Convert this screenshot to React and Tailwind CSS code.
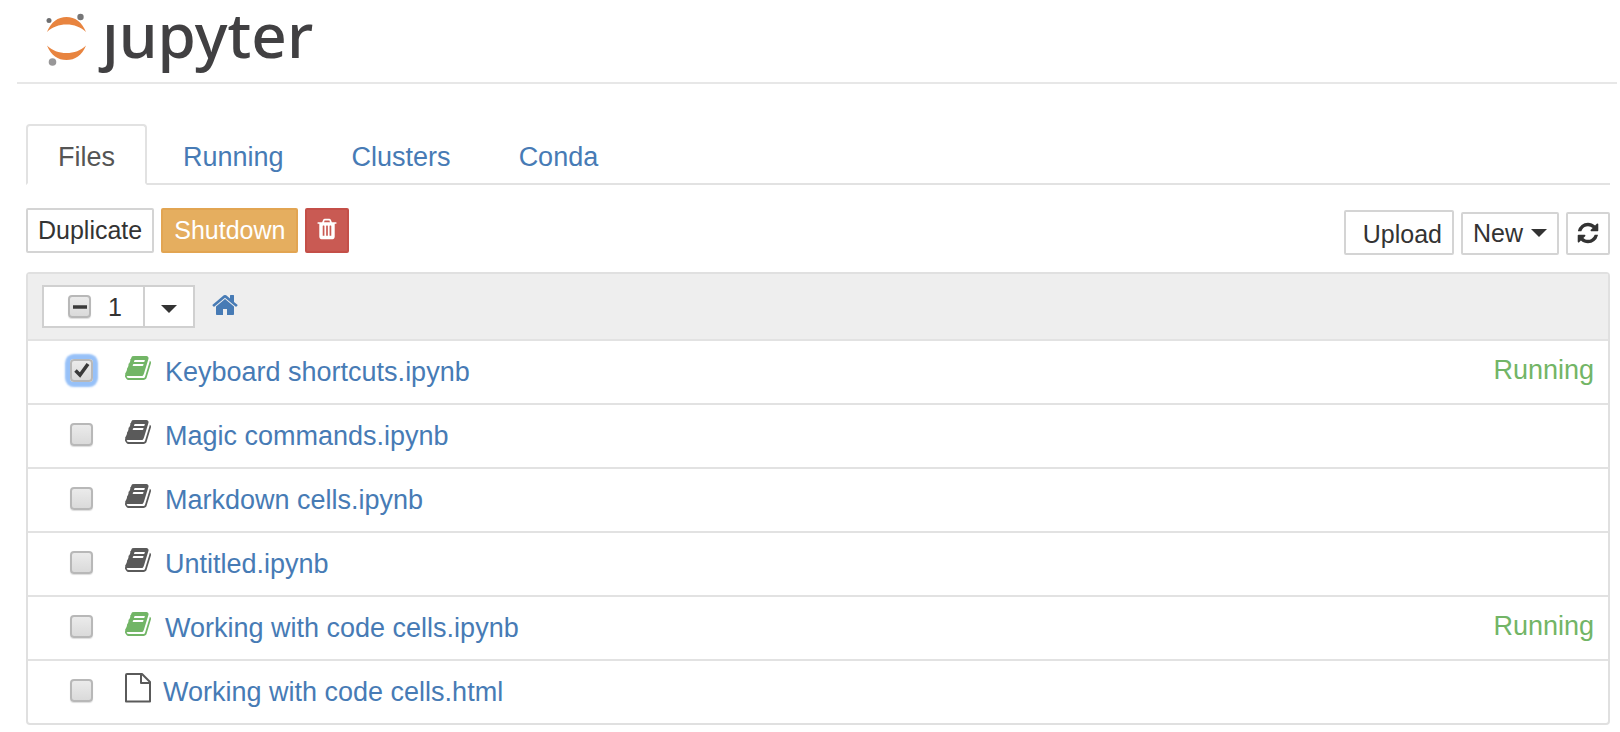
import React, { useState } from 'react';

const ICON_PATHS = {
  book: 'M1639 478q40 57 18 129l-275 906q-19 64-76.5 107.5t-122.5 43.5h-923q-77 0-148.5-53.5t-99.5-131.5q-24-67-2-127 0-4 3-27t4-37q1-8-3-21.5t-3-19.5q2-11 8-21t16.5-23.5 16.5-23.5q23-38 45-91.5t30-91.5q3-10 .5-30t-.5-28q3-11 17-28t17-23q21-36 42-92t25-90q1-9-2.5-32t.5-28q4-13 22-30.5t22-22.5q19-26 42.5-84.5t27.5-96.5q1-8-3-25.5t-2-26.5q2-8 9-18t18-23 17-21q8-12 16.5-30.5t15-35 16-36 19.5-32 26.5-23.5 36-11.5 47.5 5.5l-1 3q38-9 51-9h761q74 0 114 56t18 130l-274 906q-36 119-71.5 153.5t-128.5 34.5h-869q-27 0-38 15-11 16-1 43 24 70 144 70h923q29 0 56-15.5t35-41.5l300-987q7-22 5-57 38 15 59 43zm-1064 2q-4 13 2 22.5t20 9.5h608q13 0 25.5-9.5t16.5-22.5l21-64q4-13-2-22.5t-20-9.5h-608q-13 0-25.5 9.5t-16.5 22.5zm-83 256q-4 13 2 22.5t20 9.5h608q13 0 25.5-9.5t16.5-22.5l21-64q4-13-2-22.5t-20-9.5h-608q-13 0-25.5 9.5t-16.5 22.5z',
  home: 'M1472 992v480q0 26-19 45t-45 19h-384v-384h-256v384h-384q-26 0-45-19t-19-45v-480q0-1 .5-3t.5-3l575-474 575 474q1 2 1 6zm223-69l-62 74q-8 9-21 11h-3q-13 0-21-7l-692-577-692 577q-12 8-24 7-13-2-21-11l-62-74q-8-10-7-23.5t11-21.5l719-599q32-26 76-26t76 26l244 204v-195q0-14 9-23t23-9h192q14 0 23 9t9 23v408l219 182q10 8 11 21.5t-7 23.5z',
  refresh: 'M1639 1056q0 5-1 7-64 268-268 434.5t-478 166.5q-146 0-282.5-55t-243.5-157l-129 129q-19 19-45 19t-45-19-19-45v-448q0-26 19-45t45-19h448q26 0 45 19t19 45-19 45l-137 137q71 66 161 102t187 36q134 0 250-65t186-179q11-17 53-117 8-23 30-23h192q13 0 22.5 9.5t9.5 22.5zm25-800v448q0 26-19 45t-45 19h-448q-26 0-45-19t-19-45 19-45l138-138q-148-137-349-137-134 0-250 65t-186 179q-11 17-53 117-8 23-30 23h-199q-13 0-22.5-9.5t-9.5-22.5v-7q65-268 270-434.5t480-166.5q146 0 284 55.5t245 156.5l130-129q19-19 45-19t45 19 19 45z',
  trash: 'M704 1376v-704q0-14-9-23t-23-9h-64q-14 0-23 9t-9 23v704q0 14 9 23t23 9h64q14 0 23-9t9-23zm256 0v-704q0-14-9-23t-23-9h-64q-14 0-23 9t-9 23v704q0 14 9 23t23 9h64q14 0 23-9t9-23zm256 0v-704q0-14-9-23t-23-9h-64q-14 0-23 9t-9 23v704q0 14 9 23t23 9h64q14 0 23-9t9-23zm-544-992h448l-48-117q-7-9-17-11h-317q-10 2-17 11zm928 32v64q0 14-9 23t-23 9h-96v948q0 83-47 143.5t-113 60.5h-832q-66 0-113-58.5t-47-141.5v-952h-96q-14 0-23-9t-9-23v-64q0-14 9-23t23-9h309l70-167q15-37 54-63t79-26h320q40 0 79 26t54 63l70 167h309q14 0 23 9t9 23z'
};

const tabs = ['Files', 'Running', 'Clusters', 'Conda'];

const files = [
  { name: 'Keyboard shortcuts.ipynb', type: 'notebook', running: true },
  { name: 'Magic commands.ipynb', type: 'notebook', running: false },
  { name: 'Markdown cells.ipynb', type: 'notebook', running: false },
  { name: 'Untitled.ipynb', type: 'notebook', running: false },
  { name: 'Working with code cells.ipynb', type: 'notebook', running: true },
  { name: 'Working with code cells.html', type: 'file', running: false }
];

const Icon = ({ name, className }) => (
  <svg viewBox="0 0 1792 1792" fill="currentColor" className={className} aria-hidden="true">
    <path d={ICON_PATHS[name]} />
  </svg>
);

const FileIcon = ({ className }) => (
  <svg viewBox="0 0 26 30" fill="none" stroke="currentColor" strokeWidth="2" strokeLinejoin="round" className={className} aria-hidden="true">
    <path d="M2 1h15l8 8v19.500h-24v-26.500a1 1 0 0 1 1-1z" />
    <path d="M16 1v9h9" />
  </svg>
);

const Caret = () => (
  <svg viewBox="0 0 16 8" fill="currentColor" className="w-4 h-2" aria-hidden="true">
    <path d="M0 0h16l-8 8z" />
  </svg>
);

const Logo = () => (
  <a href="#home" className="flex items-start gap-[13px] text-[#414042]">
    <svg viewBox="0 0 44 56" className="w-11 h-14 mt-3" aria-hidden="true">
      <path d="M2 20C6 10 13 5 21.500 5S37 10 41 20C36 15 29 12.500 21.500 12.500S7 15 2 20z" fill="#e8843f" />
      <path d="M2 33.500C6 43.500 13 48 21.500 48S37 43.500 41 33.500C36 38.500 29 41 21.500 41S7 38.500 2 33.500z" fill="#e8843f" />
      <circle cx="4" cy="8.500" r="2.500" fill="#6e6f71" />
      <circle cx="35.500" cy="5" r="3.200" fill="#767677" />
      <circle cx="7.500" cy="50" r="3.800" fill="#989798" />
    </svg>
    <span className="font-['Noto_Sans'] font-medium text-[62px] leading-[68px]">ȷupyter</span>
  </a>
);

const Checkbox = ({ label, checked, mixed, onChange }) => (
  <span className="grid place-items-center shrink-0">
    <input
      type="checkbox"
      aria-label={label}
      checked={checked}
      onChange={onChange}
      className={`appearance-none [grid-area:1/1] w-[23px] h-[23px] rounded border-2 border-[#b8b8b8] bg-linear-to-b from-[#ebebeb] to-[#dadada] ${
        checked && !mixed ? 'shadow-[0_0_2px_5px_#97c1f8]' : 'shadow-[0_1px_1px_#dddddd]'
      }`}
    />
    {checked && (
      <svg viewBox="0 0 16 16" fill="none" stroke="#3a3a3a" strokeWidth="3.500" className="[grid-area:1/1] w-4 h-4 pointer-events-none" aria-hidden="true">
        {mixed ? <path d="M1 8h14" /> : <path d="M1.500 8.500l4.500 4.500L14 2" />}
      </svg>
    )}
  </span>
);

const App = () => {
  const [activeTab, setActiveTab] = useState('Files');
  const [selected, setSelected] = useState(['Keyboard shortcuts.ipynb']);

  const toggleFile = (name) => {
    setSelected(prev => (prev.includes(name) ? prev.filter(n => n !== name) : [...prev, name]));
  };

  const toggleAll = () => {
    setSelected(selected.length ? [] : files.map(f => f.name));
  };

  return (
    <div className="bg-white font-['Liberation_Sans',Arial,sans-serif] text-[27px] leading-8 text-[#333]">
      {/* Header */}
      <header className="ml-[17px] mr-[3px] pl-7 h-[84px] border-b-2 border-[#e7e7e7]">
        <Logo />
      </header>

      <main className="pl-[26px] pr-[10px] pt-10">
        {/* Tabs */}
        <nav className="flex gap-1 border-b-2 border-[#e2e2e2]">
          {tabs.map((tab) => (
            <button
              key={tab}
              onClick={() => setActiveTab(tab)}
              className={`h-[61px] px-[30px] pt-1 -mb-[2px] border-2 rounded-t ${
                activeTab === tab
                  ? 'bg-white border-[#e2e2e2] border-b-white text-[#555]'
                  : 'border-transparent text-[#477bb5]'
              }`}
            >
              {tab}
            </button>
          ))}
        </nav>

        {/* Toolbar */}
        <div className="flex justify-between items-start pt-[23px] text-[25px]">
          <div className="flex gap-[7px]">
            <button className="h-[45px] px-[10px] pb-[2px] border-2 border-[#d4d4d4] rounded-xs">Duplicate</button>
            <button className="h-[45px] px-[11px] pb-[2px] border-2 border-[#e2a552] rounded-xs bg-[#e5ae5f] text-white font-medium">Shutdown</button>
            <button aria-label="Delete" className="h-[45px] px-[8px] pb-1 border-2 border-[#c44f48] rounded-xs bg-[#c95a53] text-white">
              <Icon name="trash" className="w-6 h-6" />
            </button>
          </div>
          <div className="flex items-end gap-[7px] pt-[2px]">
            <button className="h-[45px] pl-[17px] pr-[10px] pt-[2px] border-2 border-[#d4d4d4] rounded-xs">Upload</button>
            <button className="h-[43px] px-[10px] pb-[2px] flex items-center gap-2 border-2 border-[#d4d4d4] rounded-xs">
              New <Caret />
            </button>
            <button aria-label="Refresh" className="h-[43px] px-[8px] pb-[2px] border-2 border-[#d4d4d4] rounded-xs">
              <Icon name="refresh" className="w-6 h-6" />
            </button>
          </div>
        </div>

        {/* File list */}
        <section className="mt-[17px] border-2 border-[#e0e0e0] rounded">
          <div className="flex items-center h-[65px] pl-[14px] bg-[#eee]">
            <div className="flex h-[43px] bg-white border-2 border-[#d0d0d0] text-[25px]">
              <label className="flex items-center gap-[17px] w-[101px] pl-6 border-r-2 border-[#d0d0d0]">
                <Checkbox label="Select all" checked={selected.length > 0} mixed={selected.length < files.length} onChange={toggleAll} />
                {selected.length}
              </label>
              <button aria-label="Selection options" className="flex items-center justify-center w-12 pt-1">
                <Caret />
              </button>
            </div>
            <a href="#home" aria-label="Home" className="ml-4 mb-1 text-[#477bb5]">
              <Icon name="home" className="w-7 h-7" />
            </a>
          </div>

          <ul>
            {files.map((file) => (
              <li key={file.name} className="flex items-center h-16 pl-[42px] pr-[14px] pb-1 border-t-2 border-[#e2e2e2]">
                <Checkbox label={file.name} checked={selected.includes(file.name)} onChange={() => toggleFile(file.name)} />
                <a href={`#${file.name}`} className="flex items-center ml-8 text-[#477bb5]">
                  {file.type === 'notebook' ? (
                    <Icon name="book" className={`w-7 h-7 mr-3 mb-1 ${file.running ? 'text-[#72b566]' : 'text-[#5a5a5a]'}`} />
                  ) : (
                    <FileIcon className="w-[26px] h-[30px] mr-3 mb-1 text-[#5a5a5a]" />
                  )}
                  <span className="pt-1">{file.name}</span>
                </a>
                {file.running && <span className="ml-auto text-[#72b566]">Running</span>}
              </li>
            ))}
          </ul>
        </section>
      </main>
    </div>
  );
};

export default App;
